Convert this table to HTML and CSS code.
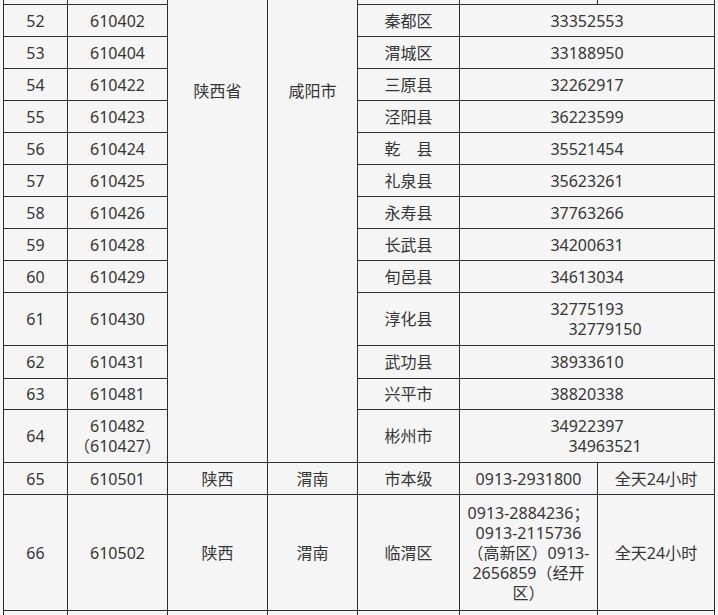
FILE: index.html
```html
<!DOCTYPE html>
<html lang="zh-CN">
<head>
<meta charset="utf-8">
<title>咸阳 渭南 联系电话</title>
<link rel="stylesheet" href="styles.css">
</head>
<body>
<table class="grid">
  <colgroup>
    <col class="c1"><col class="c2"><col class="c3"><col class="c4"><col class="c5"><col class="c6"><col class="c7">
  </colgroup>
  <tbody>
    <tr class="h32">
      <td></td><td></td>
      <td rowspan="14" class="span-cell">陕西省</td>
      <td rowspan="14" class="span-cell">咸阳市</td>
      <td></td><td></td><td></td>
    </tr>
    <tr class="h32"><td>52</td><td>610402</td><td>秦都区</td><td colspan="2">33352553</td></tr>
    <tr class="h32"><td>53</td><td>610404</td><td>渭城区</td><td colspan="2">33188950</td></tr>
    <tr class="h32"><td>54</td><td>610422</td><td>三原县</td><td colspan="2">32262917</td></tr>
    <tr class="h32"><td>55</td><td>610423</td><td>泾阳县</td><td colspan="2">36223599</td></tr>
    <tr class="h32"><td>56</td><td>610424</td><td>乾&#12288;县</td><td colspan="2">35521454</td></tr>
    <tr class="h32"><td>57</td><td>610425</td><td>礼泉县</td><td colspan="2">35623261</td></tr>
    <tr class="h32"><td>58</td><td>610426</td><td>永寿县</td><td colspan="2">37763266</td></tr>
    <tr class="h32"><td>59</td><td>610428</td><td>长武县</td><td colspan="2">34200631</td></tr>
    <tr class="h32"><td>60</td><td>610429</td><td>旬邑县</td><td colspan="2">34613034</td></tr>
    <tr class="h53"><td>61</td><td>610430</td><td>淳化县</td><td colspan="2"><span class="ln">32775193</span><span class="ln indent">32779150</span></td></tr>
    <tr class="h33"><td>62</td><td>610431</td><td>武功县</td><td colspan="2">38933610</td></tr>
    <tr class="h31"><td>63</td><td>610481</td><td>兴平市</td><td colspan="2">38820338</td></tr>
    <tr class="h53"><td>64</td><td><span class="ln">610482</span><span class="ln">（610427）</span></td><td>彬州市</td><td colspan="2"><span class="ln">34922397</span><span class="ln indent">34963521</span></td></tr>
    <tr class="h32"><td>65</td><td>610501</td><td>陕西</td><td>渭南</td><td>市本级</td><td>0913-2931800</td><td>全天24小时</td></tr>
    <tr class="h116"><td>66</td><td>610502</td><td>陕西</td><td>渭南</td><td>临渭区</td><td><span class="ln">0913-2884236；</span><span class="ln">0913-2115736</span><span class="ln">（高新区）0913-</span><span class="ln">2656859（经开</span><span class="ln">区）</span></td><td>全天24小时</td></tr>
    <tr class="h32"><td></td><td></td><td></td><td></td><td></td><td></td><td></td></tr>
  </tbody>
</table>
</body>
</html>
```
FILE: styles.css
```css
html, body {
  margin: 0;
  padding: 0;
  background: #f5f5f5;
  overflow: hidden;
}
body {
  height: 615px;
}
.grid {
  table-layout: fixed;
  border-collapse: collapse;
  width: 712px;
  margin: -28px 0 0 3px;
  font-family: "Noto Sans", "Noto Sans CJK SC", sans-serif;
  font-size: 16px;
  line-height: 20px;
  color: #363636;
  background: #f5f5f5;
}
.c1 { width: 64px; }
.c2 { width: 100px; }
.c3 { width: 100px; }
.c4 { width: 90px; }
.c5 { width: 102px; }
.c6 { width: 138px; }
.c7 { width: 117px; }
.grid td {
  border: 1px solid #2e2e2e;
  padding: 0 4px;
  text-align: center;
  vertical-align: middle;
  white-space: nowrap;
  overflow: hidden;
}
.grid td.span-cell {
  vertical-align: top;
  padding-top: 108px;
}
.h31 { height: 31px; }
.h32 { height: 32px; }
.h33 { height: 33px; }
.h53 { height: 53px; }
.h116 { height: 116px; }
.ln { display: block; }
.indent { padding-left: 36px; }
```
